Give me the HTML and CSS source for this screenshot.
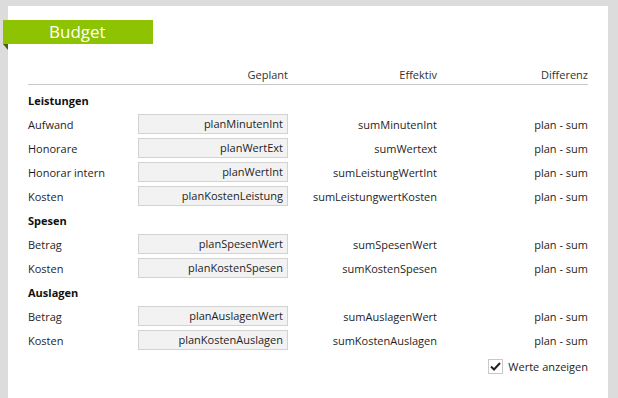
FILE: index.html
```html
<!DOCTYPE html>
<html>
<head>
<meta charset="utf-8">
<link rel="stylesheet" href="styles.css">
</head>
<body>
<div class="panel">
  <div class="ribbon"><span class="ribbon-text">Budget</span><span class="fold"></span></div>
  <div class="content">
    <div class="head">
      <div></div>
      <div class="r">Geplant</div>
      <div class="r">Effektiv</div>
      <div class="r">Differenz</div>
    </div>
    <div class="grid">
      <div class="section">Leistungen</div>
      <div class="lbl">Aufwand</div><div class="inp">planMinutenInt</div><div class="r">sumMinutenInt</div><div class="r">plan - sum</div>
      <div class="lbl">Honorare</div><div class="inp">planWertExt</div><div class="r">sumWertext</div><div class="r">plan - sum</div>
      <div class="lbl">Honorar intern</div><div class="inp">planWertInt</div><div class="r">sumLeistungWertInt</div><div class="r">plan - sum</div>
      <div class="lbl">Kosten</div><div class="inp">planKostenLeistung</div><div class="r">sumLeistungwertKosten</div><div class="r">plan - sum</div>
      <div class="section">Spesen</div>
      <div class="lbl">Betrag</div><div class="inp">planSpesenWert</div><div class="r">sumSpesenWert</div><div class="r">plan - sum</div>
      <div class="lbl">Kosten</div><div class="inp">planKostenSpesen</div><div class="r">sumKostenSpesen</div><div class="r">plan - sum</div>
      <div class="section">Auslagen</div>
      <div class="lbl">Betrag</div><div class="inp">planAuslagenWert</div><div class="r">sumAuslagenWert</div><div class="r">plan - sum</div>
      <div class="lbl">Kosten</div><div class="inp">planKostenAuslagen</div><div class="r">sumKostenAuslagen</div><div class="r">plan - sum</div>
    </div>
    <div class="check-row">
      <span class="box"><svg width="11" height="9" viewBox="0 0 11 9"><path d="M1 4.5 L4 7.5 L10 1" fill="none" stroke="#222" stroke-width="2"/></svg></span>
      <span>Werte anzeigen</span>
    </div>
  </div>
</div>
</body>
</html>
```
FILE: styles.css
```css
html, body {
  margin: 0;
  padding: 0;
  background: #dcdcdc;
  height: 100%;
  overflow: hidden;
}
body {
  font-family: "Open Sans", "Noto Sans", sans-serif;
  font-size: 11px;
  color: #1e1e1e;
}
.panel {
  background: #fff;
  margin: 6px 0 0 8px;
  width: 600px;
  height: 392px;
  padding-top: 14px;
  box-sizing: border-box;
}
.ribbon {
  position: relative;
  margin-left: -5px;
  width: 150px;
  height: 24px;
  background: #8dc300;
  display: flex;
  align-items: center;
}
.ribbon-text {
  color: #fff;
  font-size: 17px;
  padding-left: 46px;
  line-height: 24px;
}
.fold {
  position: absolute;
  left: 0;
  top: 24px;
  width: 0;
  height: 0;
  border-top: 6px solid #4d5f17;
  border-left: 5px solid transparent;
}
.content {
  margin: 0 20px;
}
.head {
  display: grid;
  grid-template-columns: 110px 150px 149px 151px;
  height: 25px;
  margin-top: 16px;
  padding-bottom: 2px;
  border-bottom: 1px solid #c8c8c8;
  align-items: end;
  box-sizing: border-box;
  color: #333;
}
.grid {
  display: grid;
  grid-template-columns: 110px 150px 149px 151px;
  grid-auto-rows: 24px;
  align-items: center;
  margin-top: 3px;
}
.section {
  grid-column: 1 / -1;
  font-weight: bold;
  color: #111;
}
.r { text-align: right; }
.inp {
  height: 20px;
  line-height: 18px;
  box-sizing: border-box;
  border: 1px solid #d2d2d2;
  background: #f2f2f2;
  text-align: right;
  padding-right: 4px;
}
.check-row {
  display: flex;
  justify-content: flex-end;
  align-items: center;
  gap: 5px;
  margin-top: 2px;
  height: 24px;
}
.box {
  width: 13px;
  height: 13px;
  border: 1px solid #c8c8c8;
  display: flex;
  align-items: center;
  justify-content: center;
  background: #fff;
}
```
